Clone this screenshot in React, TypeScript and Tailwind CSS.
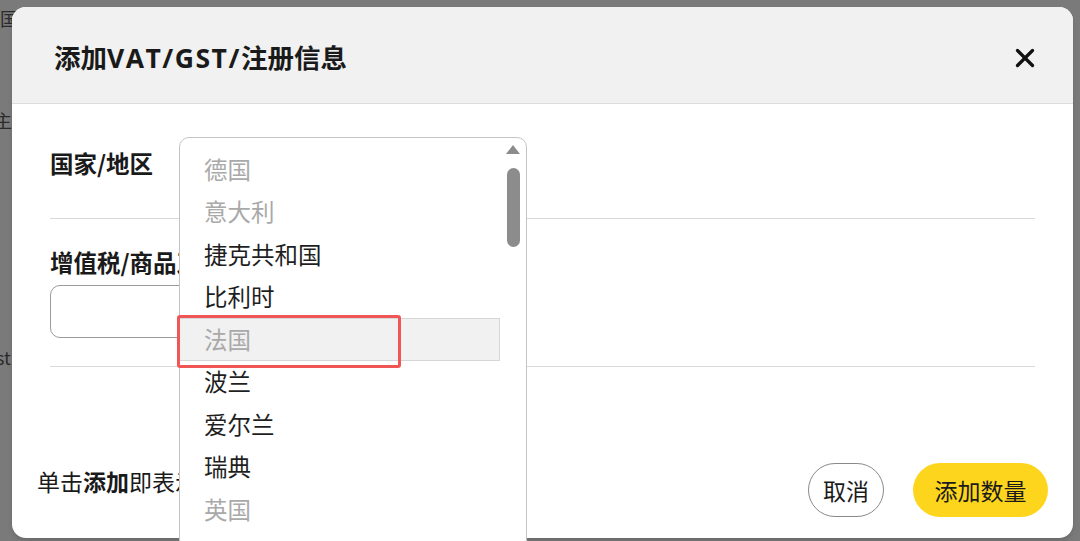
import { X } from "lucide-react";

const countries = [
  { name: "德国", muted: true },
  { name: "意大利", muted: true },
  { name: "捷克共和国", muted: false },
  { name: "比利时", muted: false },
  { name: "法国", muted: true, active: true },
  { name: "波兰", muted: false },
  { name: "爱尔兰", muted: false },
  { name: "瑞典", muted: false },
  { name: "英国", muted: true },
];

export default function App() {
  return (
    <div
      className="relative w-[1080px] h-[541px] overflow-hidden bg-[#7a7a7a]"
      style={{ fontFamily: '"Noto Sans CJK SC", "Noto Sans", sans-serif' }}
    >
      {/* page behind the overlay */}
      <span className="absolute left-0 top-[6px] text-[18px] leading-6 text-[#2b2b2b]">国家</span>
      <span className="absolute left-[-6px] top-[108px] text-[18px] leading-6 text-[#2b2b2b]">主多</span>
      <span className="absolute left-[-4px] top-[345px] text-[18px] leading-6 text-[#2b2b2b]">st</span>

      {/* dialog */}
      <div className="absolute left-[12px] top-[7px] w-[1061px] h-[531px] rounded-[14px] bg-white overflow-hidden shadow-md">
        <div className="flex items-center justify-between h-[97px] pl-[42px] pr-[33px] pt-[6px] bg-[#f0f1f0] border-b border-[#dcdcdc]">
          <h2 className="text-[26.5px] font-bold text-[#1a1a1a]">
            添加<span className="font-['Open_Sans'] font-bold tracking-[1.5px]">VAT/GST/</span>注册信息
          </h2>
          <X size={30} strokeWidth={2.6} className="text-[#111]" />
        </div>

        <div className="px-[38px]">
          <div className="pt-[44px] pb-[40px]">
            <div className="text-[23.5px] leading-[30px] font-bold text-[#1a1a1a]">国家/地区</div>
          </div>
          <div className="h-px bg-[#d9d9d9]" />
          <div className="pt-[28px] pb-[28px]">
            <div className="text-[23.5px] leading-[30px] font-bold text-[#1a1a1a]">增值税/商品及服务税号</div>
            <div className="mt-[8px] w-[420px] h-[53px] rounded-[10px] border border-[#9a9a9a]" />
          </div>
          <div className="h-px bg-[#d9d9d9]" />
        </div>

        <div className="flex items-start justify-between pl-[25px] pr-[25px] pt-[96px]">
          <p className="mt-[3px] text-[23px] leading-[30px] text-[#1a1a1a]">
            单击<b>添加</b>即表示确认
          </p>
          <div className="flex gap-[29px]">
            <button className="w-[76px] h-[54px] rounded-full border border-[#8a8a8a] bg-white text-[23px] text-[#1a1a1a]">
              取消
            </button>
            <button className="w-[135px] h-[54px] rounded-full bg-[#fdd51c] text-[23px] text-[#1a1a1a]">
              添加数量
            </button>
          </div>
        </div>
      </div>

      {/* open country list */}
      <div className="absolute left-[179px] top-[137px] w-[348px] h-[410px] flex rounded-t-[10px] border border-[#c4c4c4] bg-white">
        <ul className="w-[320px] pt-[10px]">
          {countries.map((c) => (
            <li
              key={c.name}
              className={
                "h-[42.5px] flex items-center pl-[24px] text-[23.5px] " +
                (c.muted ? "text-[#a9a9a9] " : "text-[#1f1f1f] ") +
                (c.active ? "bg-[#f0f1f0] border border-[#d6d6d6] -ml-px" : "")
              }
            >
              {c.name}
            </li>
          ))}
        </ul>
        <div className="flex-1 flex flex-col items-center pt-[7px]">
          <svg width="14" height="9" viewBox="0 0 14 9">
            <path d="M7 0 L14 9 L0 9 Z" fill="#8c8c8c" />
          </svg>
          <div className="mt-[14px] w-[13px] h-[79px] rounded-full bg-[#8c8c8c]" />
        </div>
      </div>

      {/* annotation */}
      <div className="absolute left-[177px] top-[315px] w-[224px] h-[53px] rounded-[3px] border-[3px] border-[#f05656]" />
    </div>
  );
}
